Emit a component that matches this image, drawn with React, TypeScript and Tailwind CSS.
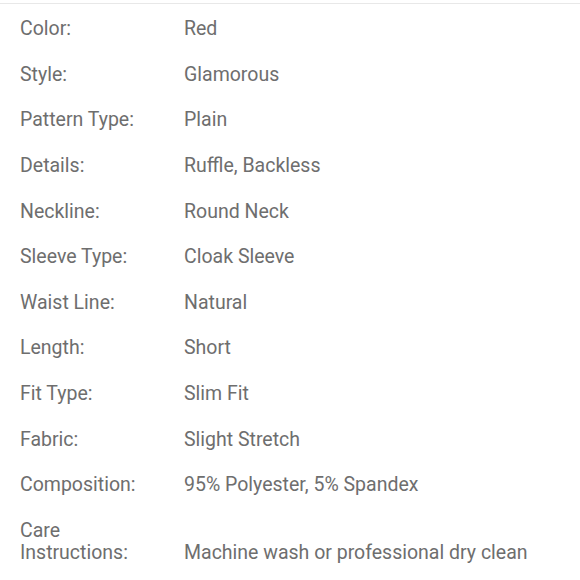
import React from "react";

const rows: [string, string][] = [
  ["Color:", "Red"],
  ["Style:", "Glamorous"],
  ["Pattern Type:", "Plain"],
  ["Details:", "Ruffle, Backless"],
  ["Neckline:", "Round Neck"],
  ["Sleeve Type:", "Cloak Sleeve"],
  ["Waist Line:", "Natural"],
  ["Length:", "Short"],
  ["Fit Type:", "Slim Fit"],
  ["Fabric:", "Slight Stretch"],
  ["Composition:", "95% Polyester, 5% Spandex"],
];

export default function App() {
  return (
    <div
      className="w-[580px] h-[580px] bg-white overflow-hidden text-[#6e6e6e] text-[19.5px] leading-[22px]"
      style={{ fontFamily: "Roboto, 'Liberation Sans', sans-serif" }}
    >
      <div className="h-[3px]" />
      <div className="border-t border-[#e8e8e8] pt-[2.5px]">
        {rows.map(([k, v]) => (
          <div key={k} className="flex py-[11.8px] pl-[20px]">
            <div className="w-[164px] shrink-0">{k}</div>
            <div>{v}</div>
          </div>
        ))}
        <div className="flex items-end py-[11.8px] pl-[20px]">
          <div className="w-[164px] shrink-0">
            Care
            <br />
            Instructions:
          </div>
          <div>Machine wash or professional dry clean</div>
        </div>
      </div>
    </div>
  );
}
